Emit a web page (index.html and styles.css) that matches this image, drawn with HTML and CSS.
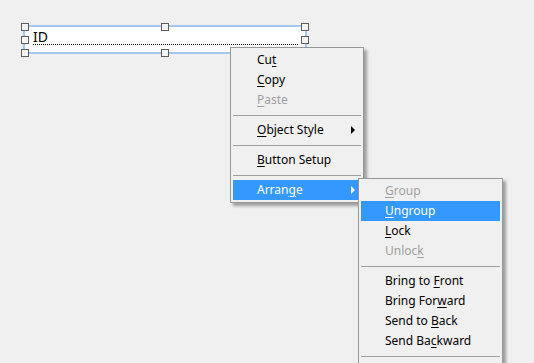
FILE: index.html
```html
<!DOCTYPE html>
<html lang="en">
<head>
    <meta charset="UTF-8">
    <title>Arrange menu</title>
    <link rel="stylesheet" href="styles.css">
</head>
<body>
    <div class="canvas">

        <!-- Selected text field with its resize handles -->
        <div class="field">
            <div class="field-line">ID</div>
            <span class="handle h-tl"></span>
            <span class="handle h-tm"></span>
            <span class="handle h-tr"></span>
            <span class="handle h-ml"></span>
            <span class="handle h-mr"></span>
            <span class="handle h-bl"></span>
            <span class="handle h-bm"></span>
            <span class="handle h-br"></span>
        </div>

        <!-- Context menu -->
        <ul class="menu menu-main">
            <li class="item">Cu<u>t</u></li>
            <li class="item"><u>C</u>opy</li>
            <li class="item disabled"><u>P</u>aste</li>
            <li class="sep"></li>
            <li class="item sub"><u>O</u>bject Style</li>
            <li class="sep"></li>
            <li class="item"><u>B</u>utton Setup</li>
            <li class="sep"></li>
            <li class="item sub active">Arran<u>g</u>e</li>
        </ul>

        <!-- Arrange submenu (runs past the bottom of the window) -->
        <ul class="menu menu-sub">
            <li class="item disabled"><u>G</u>roup</li>
            <li class="item active"><u>U</u>ngroup</li>
            <li class="item"><u>L</u>ock</li>
            <li class="item disabled">Unloc<u>k</u></li>
            <li class="sep"></li>
            <li class="item">Bring to <u>F</u>ront</li>
            <li class="item">Bring For<u>w</u>ard</li>
            <li class="item">Send to <u>B</u>ack</li>
            <li class="item">Send Ba<u>c</u>kward</li>
            <li class="sep"></li>
        </ul>

    </div>
</body>
</html>
```

FILE: styles.css
```css
body {
    margin: 0;
    background: #f0f0f0;
    font-family: 'Noto Sans', 'Open Sans', sans-serif;
}

.canvas {
    position: relative;
    width: 534px;
    height: 363px;
    overflow: hidden;
}

/* Text field on the form */
.field {
    position: absolute;
    left: 23px;
    top: 25px;
    width: 284px;
    height: 29px;
    box-sizing: border-box;
    border: 2px solid #a3c5ee;
    background: #fff;
    padding: 0 7px 0 8px;
}

.field-line {
    margin-top: 2px;
    height: 15px;
    font-size: 14px;
    line-height: 16px;
    color: #000;
    border-bottom: 1px dotted #000;
}

.handle {
    position: absolute;
    width: 8px;
    height: 8px;
    box-sizing: border-box;
    border: 1px solid #5c5c5c;
    background: #f4f4f4;
}

.h-tl { left: -4px; top: -4px; }
.h-tm { left: 136px; top: -4px; }
.h-tr { left: 276px; top: -4px; }
.h-ml { left: -4px; top: 9px; }
.h-mr { left: 276px; top: 9px; }
.h-bl { left: -4px; top: 22px; }
.h-bm { left: 136px; top: 22px; }
.h-br { left: 276px; top: 22px; }

/* Menus */
.menu {
    position: absolute;
    margin: 0;
    padding: 2px;
    list-style: none;
    background: #f0f0f0;
    border: 1px solid #979797;
    box-shadow: 3px 3px 3px rgba(0, 0, 0, 0.35);
    font-size: 12px;
    color: #000;
}

.menu-main {
    left: 230px;
    top: 47px;
    width: 128px;
}

.menu-sub {
    left: 358px;
    top: 178px;
    width: 139px;
    padding-bottom: 30px;
}

.item {
    position: relative;
    height: 20px;
    line-height: 20px;
    padding-left: 24px;
    white-space: nowrap;
}

.item u {
    text-underline-offset: 2px;
}

.item.disabled {
    color: #a0a0a0;
}

.item.active {
    background: #3399ff;
    color: #fff;
}

.item.sub::after {
    content: '';
    position: absolute;
    right: 6px;
    top: 6px;
    border-left: 4px solid #000;
    border-top: 4px solid transparent;
    border-bottom: 4px solid transparent;
}

.item.sub.active::after {
    border-left-color: #fff;
}

.sep {
    height: 10px;
    position: relative;
}

.sep::before {
    content: '';
    position: absolute;
    left: 0;
    right: 0;
    top: 5px;
    border-top: 1px solid #a0a0a0;
}
```
